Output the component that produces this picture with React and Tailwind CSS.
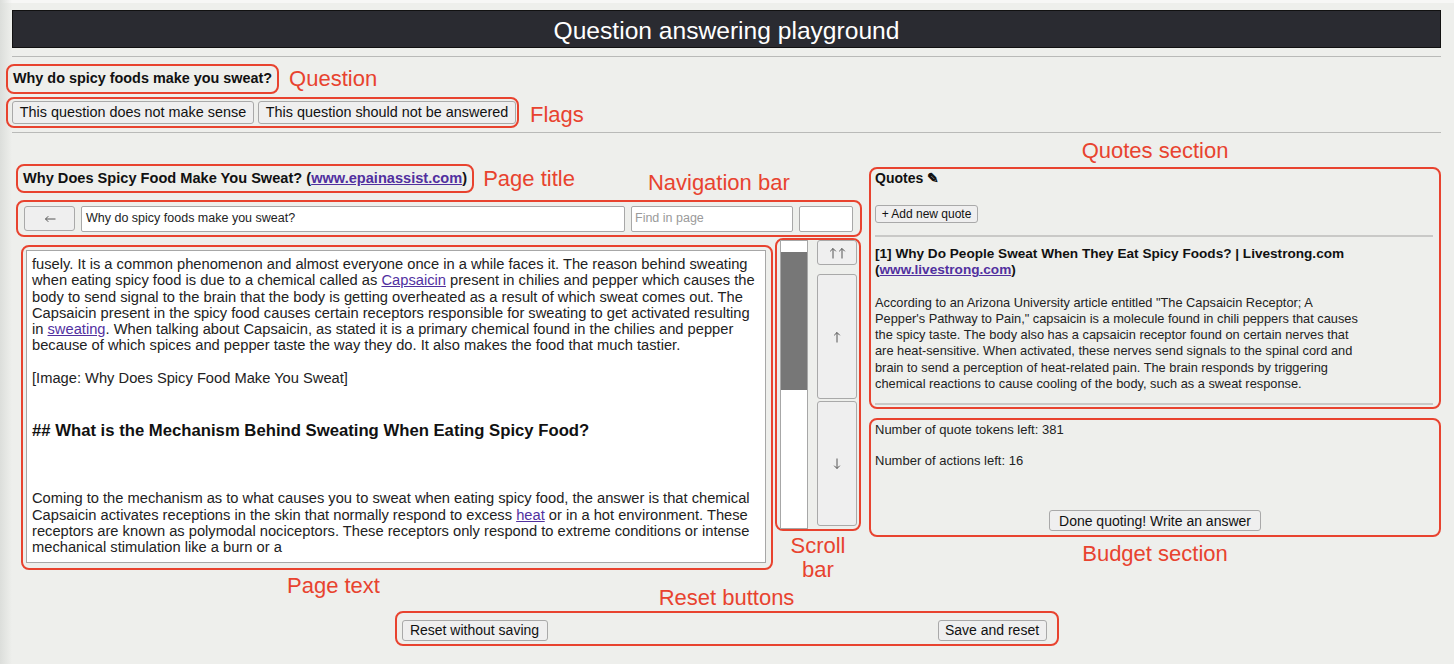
import React from 'react'

const red = 'border-2 border-[#e8432f] rounded-[8px]'
const btn = 'bg-[#efefef] border border-[#a9a9a9] rounded-[3px] text-[#111] flex items-center justify-center'

function Link({ children }) {
  return <span className="text-[#51309f] underline">{children}</span>
}

function Label({ children, className = '' }) {
  return <div className={`text-[22px] leading-[24px] text-[#e8432f] whitespace-nowrap ${className}`}>{children}</div>
}

function Arrow({ dir = 'up' }) {
  const rot = dir === 'up' ? 0 : dir === 'down' ? 180 : -90
  return (
    <svg width="8" height="12" viewBox="0 0 8 12" style={{ transform: `rotate(${rot}deg)` }}>
      <path d="M4 1.5 V11.5 M1.2 4.3 L4 1.5 L6.8 4.3" fill="none" stroke="#555" strokeWidth="1" />
    </svg>
  )
}

export default function App() {
  return (
    <div className="relative w-[1454px] h-[668px] overflow-hidden bg-[#eeefec] font-['Liberation_Sans',Arial,sans-serif] text-[#111]">
      <div className="absolute inset-y-0 left-0 w-[12px] bg-gradient-to-r from-[#dcdedb] to-transparent" />
      <div className="h-[3px] bg-[#f7f7f6]" />

      <div className="relative px-[12px] pr-[13px] pt-[7px]">
        <div className="h-[38px] bg-[#2a2b31] border border-[#111] flex items-center justify-center pt-[5px] text-white text-[24.6px]">
          Question answering playground
        </div>
        <div className="mt-[8px] border-t border-[#b9bab8]" />

        <div className="mt-[7px] flex items-center">
          <div className={`${red} ml-[-6px] h-[30px] px-[5px] flex items-center font-bold text-[14.4px]`}>
            Why do spicy foods make you sweat?
          </div>
          <Label className="ml-[10px]">Question</Label>
        </div>

        <div className="mt-[3px] flex items-center">
          <div className={`${red} ml-[-6px] h-[31px] pl-[4px] pr-[1px] flex items-center gap-[4px] text-[14.4px]`}>
            <div className={`${btn} h-[23px] w-[242px]`}>This question does not make sense</div>
            <div className={`${btn} h-[23px] w-[258px]`}>This question should not be answered</div>
          </div>
          <Label className="ml-[11px] mt-[4px]">Flags</Label>
        </div>
        <div className="mt-[4px] border-t border-[#b9bab8]" />

        <div className="flex">
          {/* left column */}
          <div className="ml-[4px] w-[846px] pt-[31px]">
            <div className="flex items-start">
              <div className={`${red} h-[29px] px-[5px] flex items-center font-bold text-[14.6px]`}>
                Why Does Spicy Food Make You Sweat? (<Link>www.epainassist.com</Link>)
              </div>
              <Label className="ml-[9px] mt-[3px]">Page title</Label>
              <Label className="ml-[73px] mt-[7px]">Navigation bar</Label>
            </div>

            <div className={`${red} mt-[5px] h-[37px] flex items-center pl-[6px]`}>
              <div className={`${btn} w-[51px] h-[25px]`}><Arrow dir="left" /></div>
              <div className="ml-[6px] w-[544px] h-[26px] bg-white border border-[#a8a8a8] rounded-[2px] flex items-center px-[4px] text-[12.5px] text-[#222]">
                Why do spicy foods make you sweat?
              </div>
              <div className="ml-[6px] w-[162px] h-[26px] bg-white border border-[#a8a8a8] rounded-[2px] flex items-center px-[3px] text-[12.5px] text-[#9a9a9a]">
                Find in page
              </div>
              <div className="ml-[6px] w-[54px] h-[26px] bg-white border border-[#a8a8a8] rounded-[2px]" />
            </div>

            <div className="mt-[1px] flex items-start">
              <div className="ml-[5px] mb-[-12px]">
                <div className={`${red} mt-[7px] w-[752px] h-[325px] pl-[3px] pt-[3px]`}>
                  <div className="w-[740px] h-[313px] bg-white border border-[#a7a7a7] px-[5px] pt-[5px] text-[14.7px] leading-[16.3px] text-[#222] overflow-hidden whitespace-nowrap">
                    <p>
                      fusely. It is a common phenomenon and almost everyone once in a while faces it. The reason behind sweating<br />
                      when eating spicy food is due to a chemical called as <Link>Capsaicin</Link> present in chilies and pepper which causes the<br />
                      body to send signal to the brain that the body is getting overheated as a result of which sweat comes out. The<br />
                      Capsaicin present in the spicy food causes certain receptors responsible for sweating to get activated resulting<br />
                      in <Link>sweating</Link>. When talking about Capsaicin, as stated it is a primary chemical found in the chilies and pepper<br />
                      because of which spices and pepper taste the way they do. It also makes the food that much tastier.
                    </p>
                    <p className="mt-[16.3px]">[Image: Why Does Spicy Food Make You Sweat]</p>
                    <p className="mt-[35px] text-[16.7px] leading-[20px] font-bold text-[#111]">
                      ## What is the Mechanism Behind Sweating When Eating Spicy Food?
                    </p>
                    <p className="mt-[49px]">
                      Coming to the mechanism as to what causes you to sweat when eating spicy food, the answer is that chemical<br />
                      Capsaicin activates receptions in the skin that normally respond to excess <Link>heat</Link> or in a hot environment. These<br />
                      receptors are known as polymodal nociceptors. These receptors only respond to extreme conditions or intense<br />
                      mechanical stimulation like a burn or a
                    </p>
                  </div>
                </div>
                <Label className="ml-[266px] mt-[4px]">Page text</Label>
              </div>

              <div className="ml-[2px] flex flex-col items-center">
                <div className={`${red} w-[86px] h-[293px] flex pl-[3px]`}>
                  <div className="w-[28px] h-[289px] bg-white border border-[#a7a7a7] pt-[11px]">
                    <div className="h-[138px] bg-[#777777]" />
                  </div>
                  <div className="ml-[9px] flex flex-col">
                    <div className={`${btn} w-[40px] h-[25px] gap-[1px]`}><Arrow /><Arrow /></div>
                    <div className={`${btn} mt-[9px] w-[40px] h-[125px]`}><Arrow /></div>
                    <div className={`${btn} mt-[2px] w-[40px] h-[125px]`}><Arrow dir="down" /></div>
                  </div>
                </div>
                <Label className="mt-[3px] text-center">Scroll<br />bar</Label>
              </div>
            </div>
          </div>

          {/* right column */}
          <div className="ml-[7px] w-[572px] pt-[6px] flex flex-col items-center">
            <Label>Quotes section</Label>
            <div className={`${red} mt-[4px] w-[572px] h-[242px] pl-[4px] pr-[6px] text-[#111]`}>
              <div className="font-bold text-[14px] leading-[18px]">Quotes ✎</div>
              <div className={`${btn} mt-[18px] w-[103px] h-[18px] text-[12px]`}>+ Add new quote</div>
              <div className="mt-[12px] border-t-2 border-[#c9c9c7]" />
              <div className="mt-[9px] font-bold text-[13.6px] leading-[16.3px] whitespace-nowrap">
                [1] Why Do People Sweat When They Eat Spicy Foods? | Livestrong.com<br />
                (<Link>www.livestrong.com</Link>)
              </div>
              <div className="mt-[16px] text-[12.8px] leading-[16.3px] text-[#222] whitespace-nowrap">
                According to an Arizona University article entitled "The Capsaicin Receptor; A<br />
                Pepper's Pathway to Pain," capsaicin is a molecule found in chili peppers that causes<br />
                the spicy taste. The body also has a capsaicin receptor found on certain nerves that<br />
                are heat-sensitive. When activated, these nerves send signals to the spinal cord and<br />
                brain to send a perception of heat-related pain. The brain responds by triggering<br />
                chemical reactions to cause cooling of the body, such as a sweat response.
              </div>
              <div className="mt-[11px] border-t-2 border-[#c9c9c7]" />
            </div>
            <div className={`${red} mt-[9px] w-[572px] h-[119px] pl-[4px] pr-[4px] pt-[2px] flex flex-col text-[13px] leading-[16px] text-[#222]`}>
              <div>Number of quote tokens left: 381</div>
              <div className="mt-[15px]">Number of actions left: 16</div>
              <div className={`${btn} mt-auto mb-[4px] self-center w-[212px] h-[21px] text-[14px]`}>Done quoting! Write an answer</div>
            </div>
            <Label className="mt-[5px]">Budget section</Label>
          </div>
        </div>

        <div className="flex flex-col items-center">
          <Label>Reset buttons</Label>
          <div className={`${red} mt-[1px] w-[664px] h-[35px] flex items-center justify-between pl-[5px] pr-[10px]`}>
            <div className={`${btn} w-[146px] h-[21px] text-[14px] mt-[3px]`}>Reset without saving</div>
            <div className={`${btn} w-[109px] h-[21px] text-[14px] mt-[3px]`}>Save and reset</div>
          </div>
        </div>
      </div>
      <div className="absolute bottom-0 inset-x-0 h-[4px] bg-white" />
    </div>
  )
}
